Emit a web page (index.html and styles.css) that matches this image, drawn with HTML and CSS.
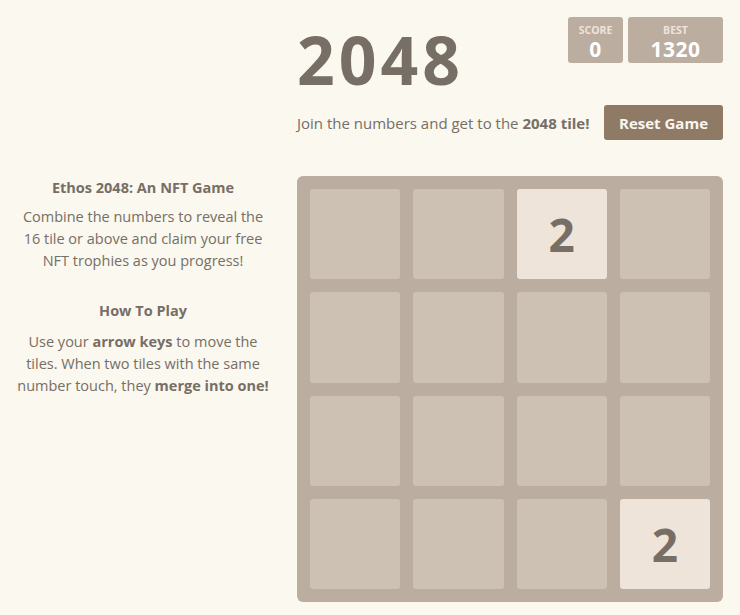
FILE: index.html
```html
<!DOCTYPE html>
<html lang="en">
<head>
<meta charset="utf-8">
<title>Ethos 2048</title>
<link rel="stylesheet" href="styles.css">
</head>
<body>
<div class="page">
  <div class="spacer"></div>
  <header class="heading">
    <h1 class="title">2048</h1>
    <div class="scores">
      <div class="score-box score-current">
        <div class="score-label">Score</div>
        <div class="score-value">0</div>
      </div>
      <div class="score-box score-best">
        <div class="score-label">Best</div>
        <div class="score-value">1320</div>
      </div>
    </div>
  </header>
  <div class="spacer"></div>
  <div class="above-game">
    <p class="intro">Join the numbers and get to the <strong>2048 tile!</strong></p>
    <button class="reset-button">Reset Game</button>
  </div>
  <aside class="info">
    <h2 class="info-title">Ethos 2048: An NFT Game</h2>
    <p class="info-text">Combine the numbers to reveal the 16 tile or above and claim your free NFT trophies as you progress!</p>
    <h2 class="info-title info-title-second">How To Play</h2>
    <p class="info-text">Use your <strong>arrow keys</strong> to move the tiles. When two tiles with the same number touch, they <strong>merge into one!</strong></p>
  </aside>
  <div class="board">
    <div class="cell"></div>
    <div class="cell"></div>
    <div class="cell tile-2">2</div>
    <div class="cell"></div>
    <div class="cell"></div>
    <div class="cell"></div>
    <div class="cell"></div>
    <div class="cell"></div>
    <div class="cell"></div>
    <div class="cell"></div>
    <div class="cell"></div>
    <div class="cell"></div>
    <div class="cell"></div>
    <div class="cell"></div>
    <div class="cell"></div>
    <div class="cell tile-2">2</div>
  </div>
</div>
</body>
</html>
```

FILE: styles.css
```css
html, body {
  margin: 0;
  padding: 0;
  background: #faf8ef;
  color: #776e65;
  font-family: "Open Sans", "DejaVu Sans", sans-serif;
}

.page {
  display: grid;
  grid-template-columns: 286px 426px;
  column-gap: 11px;
}

.heading {
  display: flex;
  justify-content: space-between;
  align-items: flex-start;
  height: 103px;
}

.title {
  margin: 26px 0 0 0;
  font-size: 66px;
  line-height: 66px;
  font-weight: 700;
  letter-spacing: 4px;
}

.scores {
  display: flex;
  gap: 5px;
  margin-top: 17px;
}

.score-box {
  background: #bbada0;
  border-radius: 3px;
  height: 46px;
  display: flex;
  flex-direction: column;
  align-items: center;
  box-sizing: border-box;
  padding-top: 7px;
}

.score-current { width: 55px; }
.score-best { width: 95px; }

.score-label {
  font-size: 10.5px;
  line-height: 13px;
  font-weight: 700;
  text-transform: uppercase;
  color: #eee4da;
}

.score-value {
  font-size: 21px;
  line-height: 24px;
  font-weight: 700;
  color: #ffffff;
  letter-spacing: 0.5px;
}

.above-game {
  display: flex;
  justify-content: space-between;
  align-items: center;
  height: 73px;
  align-self: start;
}

.above-game .intro {
  margin: 0;
  font-size: 15px;
  line-height: 20px;
  padding-bottom: 34px;
}

.intro strong { font-weight: 700; }

.reset-button {
  background: #8f7a66;
  color: #f9f6f2;
  border: none;
  border-radius: 3px;
  width: 119px;
  height: 35px;
  font-family: inherit;
  font-size: 15px;
  font-weight: 700;
  padding: 0;
  margin-bottom: 34px;
}

.info {
  text-align: center;
  padding: 2px 15px 0 15px;
}

.info-title {
  margin: 0 0 8px 0;
  font-size: 14.5px;
  line-height: 20px;
  font-weight: 700;
}

.info-title-second {
  margin-top: 29px;
  margin-bottom: 10px;
}

.info-text {
  margin: 0;
  font-size: 14.5px;
  line-height: 22px;
}

.info-text strong { font-weight: 700; }

.board {
  width: 426px;
  height: 426px;
  box-sizing: border-box;
  background: #bbada0;
  border-radius: 6px;
  padding: 13px;
  display: grid;
  grid-template-columns: repeat(4, 1fr);
  grid-template-rows: repeat(4, 1fr);
  gap: 13px;
}

.cell {
  background: #cdc1b4;
  border-radius: 3px;
  display: flex;
  align-items: center;
  justify-content: center;
  font-size: 46px;
  font-weight: 700;
}

.tile-2 {
  background: #eee4da;
  color: #776e65;
}
```
